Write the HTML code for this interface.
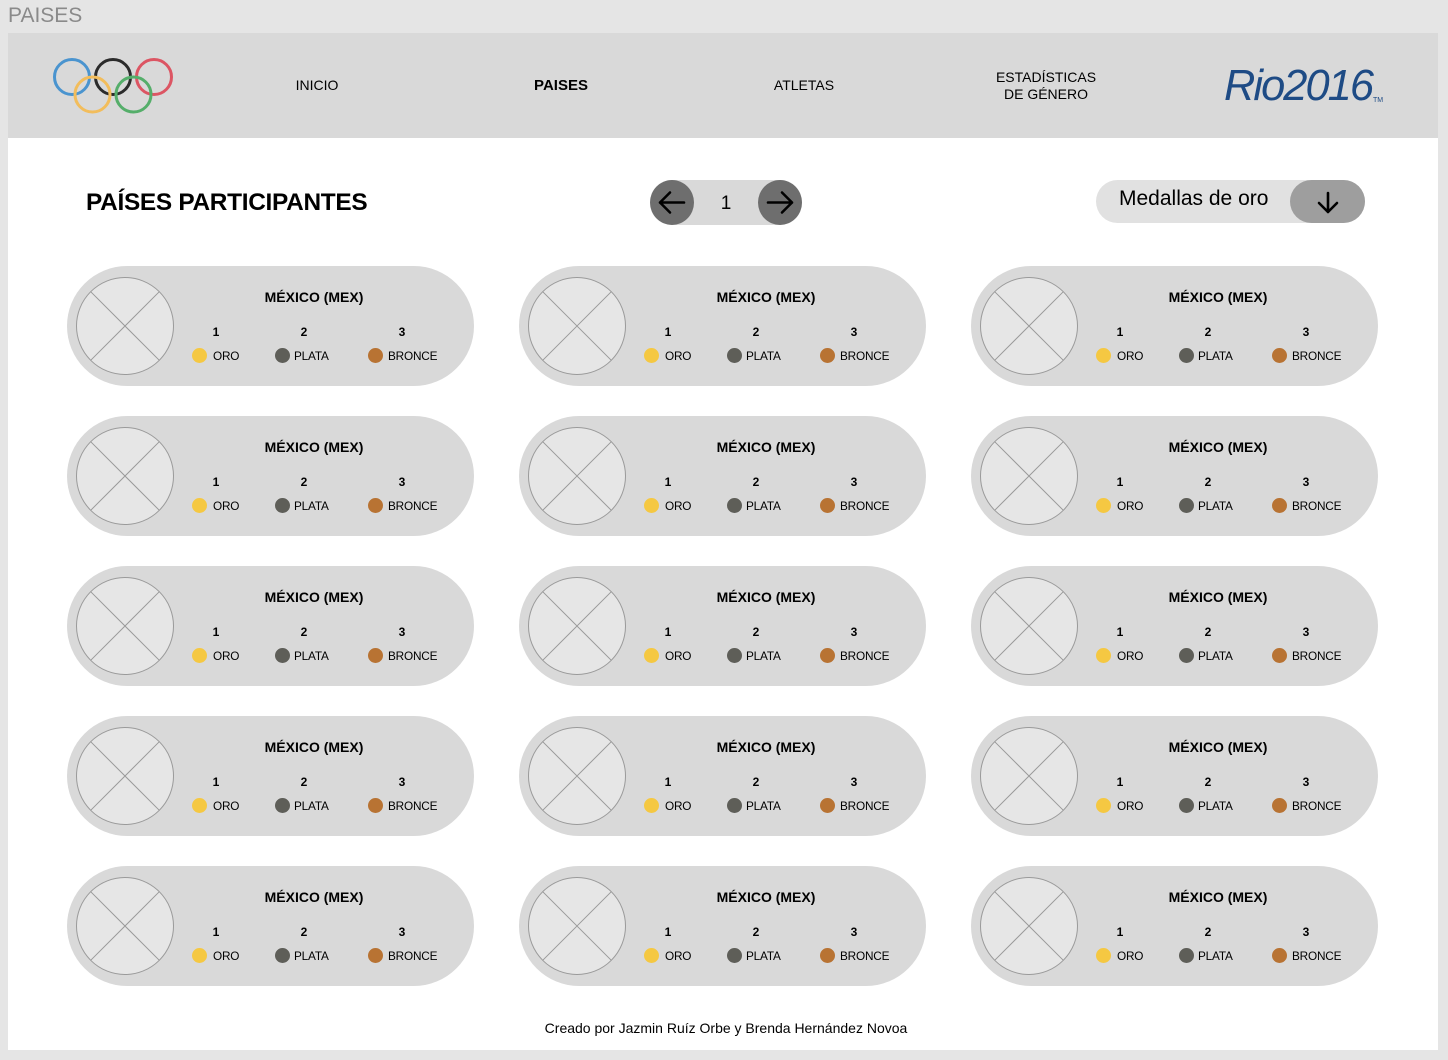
<!DOCTYPE html>
<html><head><meta charset="utf-8">
<style>
*{margin:0;padding:0;box-sizing:border-box}
body{width:1448px;height:1060px;background:#e5e5e5;font-family:"Liberation Sans",Arial,sans-serif;position:relative;overflow:hidden;color:#000}
.abs{position:absolute}
#title{left:8px;top:4px;font-size:21px;color:#8a8a8a}
#panel{left:8px;top:33px;width:1430px;height:1017px;background:#fff}
#hdr{left:8px;top:33px;width:1430px;height:105px;background:#d9d9d9}
.nav{font-size:14px;text-align:center;line-height:17px;transform:translateX(-50%)}
.card{position:absolute;width:407px;height:120px;border-radius:60px;background:#d9d9d9}
.card .img{position:absolute;left:9px;top:11px;width:98px;height:98px}
.card .t{position:absolute;left:147px;width:200px;text-align:center;top:23px;font-size:14px;font-weight:bold}
.card .n{position:absolute;top:59px;font-size:12px;font-weight:bold;width:20px;text-align:center;margin-left:-9px}
.card .d{position:absolute;top:82px;width:15px;height:15px;border-radius:50%;margin-left:-7.5px}
.card .l{position:absolute;top:83px;font-size:11.8px;letter-spacing:-0.2px}
</style></head><body>
<div class="abs" id="title">PAISES</div>
<div class="abs" id="panel"></div>
<div class="abs" id="hdr"></div>
<svg class="abs" style="left:50px;top:55px" width="126" height="60" viewBox="0 0 126 60">
<g fill="none" stroke-width="3">
<circle cx="22" cy="22" r="17.5" stroke="#4a94cf"/>
<circle cx="63" cy="22" r="17.5" stroke="#2b2b2b"/>
<circle cx="104" cy="22" r="17.5" stroke="#dc5563"/>
<circle cx="42.5" cy="39.5" r="17.5" stroke="#f2bd5c"/>
<circle cx="83.5" cy="39.5" r="17.5" stroke="#55ae6a"/>
</g></svg>
<div class="abs nav" style="left:317px;top:77px">INICIO</div>
<div class="abs nav" style="left:561px;top:77px;font-weight:bold;font-size:15px">PAISES</div>
<div class="abs nav" style="left:804px;top:77px">ATLETAS</div>
<div class="abs nav" style="left:1046px;top:69px">ESTADÍSTICAS<br>DE GÉNERO</div>
<svg class="abs" style="left:1222px;top:60px" width="170" height="46">
<text x="2" y="40" font-family="Liberation Sans, sans-serif" font-style="italic" font-size="44" fill="#1e4b85" textLength="148" lengthAdjust="spacingAndGlyphs" letter-spacing="-2">Rio2016</text>
<text x="151" y="42" font-family="Liberation Sans, sans-serif" font-size="7" fill="#1e4b85">TM</text>
</svg>
<div class="abs" style="left:86px;top:189px;font-size:24.4px;font-weight:900;letter-spacing:-0.3px">PAÍSES PARTICIPANTES</div>
<div class="abs" style="left:650px;top:180px;width:152px;height:45px;border-radius:23px;background:#d9d9d9"></div>
<div class="abs" style="left:650px;top:180px;width:44px;height:45px;border-radius:50%;background:#6e6e6e"></div>
<div class="abs" style="left:758px;top:180px;width:44px;height:45px;border-radius:50%;background:#6e6e6e"></div>
<svg class="abs" style="left:650px;top:180px" width="152" height="45">
<g fill="none" stroke="#000" stroke-width="2.6" stroke-linecap="round" stroke-linejoin="round">
<path d="M34 22.5H10M20 12.5L10 22.5L20 32.5"/>
<path d="M118 22.5H142M132 12.5L142 22.5L132 32.5"/>
</g>
<text x="76" y="29" text-anchor="middle" font-size="19" font-family="Liberation Sans, sans-serif">1</text>
</svg>
<div class="abs" style="left:1096px;top:180px;width:269px;height:43px;border-radius:22px;background:#e1e1e1"></div>
<div class="abs" style="left:1290px;top:180px;width:75px;height:43px;border-radius:22px;background:#9e9e9e"></div>
<div class="abs" style="left:1119px;top:187px;font-size:21px">Medallas de oro</div>
<svg class="abs" style="left:1290px;top:180px" width="75" height="43">
<path d="M38 13V32M29 23L38 32L47 23" fill="none" stroke="#000" stroke-width="2.6" stroke-linecap="round" stroke-linejoin="round"/>
</svg>

<div class="abs" style="left:0;width:1452px;text-align:center;top:1020px;font-size:14px">Creado por Jazmin Ruíz Orbe y Brenda Hernández Novoa</div>

<div class="card" style="left:67px;top:266px"><svg class="img" viewBox="0 0 98 98"><circle cx="49" cy="49" r="48.5" fill="#e6e6e6" stroke="#9a9a9a"/><path d="M14.7 14.7L83.3 83.3M83.3 14.7L14.7 83.3" stroke="#9a9a9a"/></svg><div class="t">MÉXICO (MEX)</div><div class="n" style="left:148px">1</div><div class="n" style="left:236px">2</div><div class="n" style="left:334px">3</div><div class="d" style="left:132px;background:#f5c842"></div><div class="d" style="left:215px;background:#5e5e58"></div><div class="d" style="left:308px;background:#b87333"></div><div class="l" style="left:146px">ORO</div><div class="l" style="left:227px">PLATA</div><div class="l" style="left:321px">BRONCE</div></div>
<div class="card" style="left:519px;top:266px"><svg class="img" viewBox="0 0 98 98"><circle cx="49" cy="49" r="48.5" fill="#e6e6e6" stroke="#9a9a9a"/><path d="M14.7 14.7L83.3 83.3M83.3 14.7L14.7 83.3" stroke="#9a9a9a"/></svg><div class="t">MÉXICO (MEX)</div><div class="n" style="left:148px">1</div><div class="n" style="left:236px">2</div><div class="n" style="left:334px">3</div><div class="d" style="left:132px;background:#f5c842"></div><div class="d" style="left:215px;background:#5e5e58"></div><div class="d" style="left:308px;background:#b87333"></div><div class="l" style="left:146px">ORO</div><div class="l" style="left:227px">PLATA</div><div class="l" style="left:321px">BRONCE</div></div>
<div class="card" style="left:971px;top:266px"><svg class="img" viewBox="0 0 98 98"><circle cx="49" cy="49" r="48.5" fill="#e6e6e6" stroke="#9a9a9a"/><path d="M14.7 14.7L83.3 83.3M83.3 14.7L14.7 83.3" stroke="#9a9a9a"/></svg><div class="t">MÉXICO (MEX)</div><div class="n" style="left:148px">1</div><div class="n" style="left:236px">2</div><div class="n" style="left:334px">3</div><div class="d" style="left:132px;background:#f5c842"></div><div class="d" style="left:215px;background:#5e5e58"></div><div class="d" style="left:308px;background:#b87333"></div><div class="l" style="left:146px">ORO</div><div class="l" style="left:227px">PLATA</div><div class="l" style="left:321px">BRONCE</div></div>

<div class="card" style="left:67px;top:416px"><svg class="img" viewBox="0 0 98 98"><circle cx="49" cy="49" r="48.5" fill="#e6e6e6" stroke="#9a9a9a"/><path d="M14.7 14.7L83.3 83.3M83.3 14.7L14.7 83.3" stroke="#9a9a9a"/></svg><div class="t">MÉXICO (MEX)</div><div class="n" style="left:148px">1</div><div class="n" style="left:236px">2</div><div class="n" style="left:334px">3</div><div class="d" style="left:132px;background:#f5c842"></div><div class="d" style="left:215px;background:#5e5e58"></div><div class="d" style="left:308px;background:#b87333"></div><div class="l" style="left:146px">ORO</div><div class="l" style="left:227px">PLATA</div><div class="l" style="left:321px">BRONCE</div></div>
<div class="card" style="left:519px;top:416px"><svg class="img" viewBox="0 0 98 98"><circle cx="49" cy="49" r="48.5" fill="#e6e6e6" stroke="#9a9a9a"/><path d="M14.7 14.7L83.3 83.3M83.3 14.7L14.7 83.3" stroke="#9a9a9a"/></svg><div class="t">MÉXICO (MEX)</div><div class="n" style="left:148px">1</div><div class="n" style="left:236px">2</div><div class="n" style="left:334px">3</div><div class="d" style="left:132px;background:#f5c842"></div><div class="d" style="left:215px;background:#5e5e58"></div><div class="d" style="left:308px;background:#b87333"></div><div class="l" style="left:146px">ORO</div><div class="l" style="left:227px">PLATA</div><div class="l" style="left:321px">BRONCE</div></div>
<div class="card" style="left:971px;top:416px"><svg class="img" viewBox="0 0 98 98"><circle cx="49" cy="49" r="48.5" fill="#e6e6e6" stroke="#9a9a9a"/><path d="M14.7 14.7L83.3 83.3M83.3 14.7L14.7 83.3" stroke="#9a9a9a"/></svg><div class="t">MÉXICO (MEX)</div><div class="n" style="left:148px">1</div><div class="n" style="left:236px">2</div><div class="n" style="left:334px">3</div><div class="d" style="left:132px;background:#f5c842"></div><div class="d" style="left:215px;background:#5e5e58"></div><div class="d" style="left:308px;background:#b87333"></div><div class="l" style="left:146px">ORO</div><div class="l" style="left:227px">PLATA</div><div class="l" style="left:321px">BRONCE</div></div>

<div class="card" style="left:67px;top:566px"><svg class="img" viewBox="0 0 98 98"><circle cx="49" cy="49" r="48.5" fill="#e6e6e6" stroke="#9a9a9a"/><path d="M14.7 14.7L83.3 83.3M83.3 14.7L14.7 83.3" stroke="#9a9a9a"/></svg><div class="t">MÉXICO (MEX)</div><div class="n" style="left:148px">1</div><div class="n" style="left:236px">2</div><div class="n" style="left:334px">3</div><div class="d" style="left:132px;background:#f5c842"></div><div class="d" style="left:215px;background:#5e5e58"></div><div class="d" style="left:308px;background:#b87333"></div><div class="l" style="left:146px">ORO</div><div class="l" style="left:227px">PLATA</div><div class="l" style="left:321px">BRONCE</div></div>
<div class="card" style="left:519px;top:566px"><svg class="img" viewBox="0 0 98 98"><circle cx="49" cy="49" r="48.5" fill="#e6e6e6" stroke="#9a9a9a"/><path d="M14.7 14.7L83.3 83.3M83.3 14.7L14.7 83.3" stroke="#9a9a9a"/></svg><div class="t">MÉXICO (MEX)</div><div class="n" style="left:148px">1</div><div class="n" style="left:236px">2</div><div class="n" style="left:334px">3</div><div class="d" style="left:132px;background:#f5c842"></div><div class="d" style="left:215px;background:#5e5e58"></div><div class="d" style="left:308px;background:#b87333"></div><div class="l" style="left:146px">ORO</div><div class="l" style="left:227px">PLATA</div><div class="l" style="left:321px">BRONCE</div></div>
<div class="card" style="left:971px;top:566px"><svg class="img" viewBox="0 0 98 98"><circle cx="49" cy="49" r="48.5" fill="#e6e6e6" stroke="#9a9a9a"/><path d="M14.7 14.7L83.3 83.3M83.3 14.7L14.7 83.3" stroke="#9a9a9a"/></svg><div class="t">MÉXICO (MEX)</div><div class="n" style="left:148px">1</div><div class="n" style="left:236px">2</div><div class="n" style="left:334px">3</div><div class="d" style="left:132px;background:#f5c842"></div><div class="d" style="left:215px;background:#5e5e58"></div><div class="d" style="left:308px;background:#b87333"></div><div class="l" style="left:146px">ORO</div><div class="l" style="left:227px">PLATA</div><div class="l" style="left:321px">BRONCE</div></div>

<div class="card" style="left:67px;top:716px"><svg class="img" viewBox="0 0 98 98"><circle cx="49" cy="49" r="48.5" fill="#e6e6e6" stroke="#9a9a9a"/><path d="M14.7 14.7L83.3 83.3M83.3 14.7L14.7 83.3" stroke="#9a9a9a"/></svg><div class="t">MÉXICO (MEX)</div><div class="n" style="left:148px">1</div><div class="n" style="left:236px">2</div><div class="n" style="left:334px">3</div><div class="d" style="left:132px;background:#f5c842"></div><div class="d" style="left:215px;background:#5e5e58"></div><div class="d" style="left:308px;background:#b87333"></div><div class="l" style="left:146px">ORO</div><div class="l" style="left:227px">PLATA</div><div class="l" style="left:321px">BRONCE</div></div>
<div class="card" style="left:519px;top:716px"><svg class="img" viewBox="0 0 98 98"><circle cx="49" cy="49" r="48.5" fill="#e6e6e6" stroke="#9a9a9a"/><path d="M14.7 14.7L83.3 83.3M83.3 14.7L14.7 83.3" stroke="#9a9a9a"/></svg><div class="t">MÉXICO (MEX)</div><div class="n" style="left:148px">1</div><div class="n" style="left:236px">2</div><div class="n" style="left:334px">3</div><div class="d" style="left:132px;background:#f5c842"></div><div class="d" style="left:215px;background:#5e5e58"></div><div class="d" style="left:308px;background:#b87333"></div><div class="l" style="left:146px">ORO</div><div class="l" style="left:227px">PLATA</div><div class="l" style="left:321px">BRONCE</div></div>
<div class="card" style="left:971px;top:716px"><svg class="img" viewBox="0 0 98 98"><circle cx="49" cy="49" r="48.5" fill="#e6e6e6" stroke="#9a9a9a"/><path d="M14.7 14.7L83.3 83.3M83.3 14.7L14.7 83.3" stroke="#9a9a9a"/></svg><div class="t">MÉXICO (MEX)</div><div class="n" style="left:148px">1</div><div class="n" style="left:236px">2</div><div class="n" style="left:334px">3</div><div class="d" style="left:132px;background:#f5c842"></div><div class="d" style="left:215px;background:#5e5e58"></div><div class="d" style="left:308px;background:#b87333"></div><div class="l" style="left:146px">ORO</div><div class="l" style="left:227px">PLATA</div><div class="l" style="left:321px">BRONCE</div></div>

<div class="card" style="left:67px;top:866px"><svg class="img" viewBox="0 0 98 98"><circle cx="49" cy="49" r="48.5" fill="#e6e6e6" stroke="#9a9a9a"/><path d="M14.7 14.7L83.3 83.3M83.3 14.7L14.7 83.3" stroke="#9a9a9a"/></svg><div class="t">MÉXICO (MEX)</div><div class="n" style="left:148px">1</div><div class="n" style="left:236px">2</div><div class="n" style="left:334px">3</div><div class="d" style="left:132px;background:#f5c842"></div><div class="d" style="left:215px;background:#5e5e58"></div><div class="d" style="left:308px;background:#b87333"></div><div class="l" style="left:146px">ORO</div><div class="l" style="left:227px">PLATA</div><div class="l" style="left:321px">BRONCE</div></div>
<div class="card" style="left:519px;top:866px"><svg class="img" viewBox="0 0 98 98"><circle cx="49" cy="49" r="48.5" fill="#e6e6e6" stroke="#9a9a9a"/><path d="M14.7 14.7L83.3 83.3M83.3 14.7L14.7 83.3" stroke="#9a9a9a"/></svg><div class="t">MÉXICO (MEX)</div><div class="n" style="left:148px">1</div><div class="n" style="left:236px">2</div><div class="n" style="left:334px">3</div><div class="d" style="left:132px;background:#f5c842"></div><div class="d" style="left:215px;background:#5e5e58"></div><div class="d" style="left:308px;background:#b87333"></div><div class="l" style="left:146px">ORO</div><div class="l" style="left:227px">PLATA</div><div class="l" style="left:321px">BRONCE</div></div>
<div class="card" style="left:971px;top:866px"><svg class="img" viewBox="0 0 98 98"><circle cx="49" cy="49" r="48.5" fill="#e6e6e6" stroke="#9a9a9a"/><path d="M14.7 14.7L83.3 83.3M83.3 14.7L14.7 83.3" stroke="#9a9a9a"/></svg><div class="t">MÉXICO (MEX)</div><div class="n" style="left:148px">1</div><div class="n" style="left:236px">2</div><div class="n" style="left:334px">3</div><div class="d" style="left:132px;background:#f5c842"></div><div class="d" style="left:215px;background:#5e5e58"></div><div class="d" style="left:308px;background:#b87333"></div><div class="l" style="left:146px">ORO</div><div class="l" style="left:227px">PLATA</div><div class="l" style="left:321px">BRONCE</div></div>
</body></html>
